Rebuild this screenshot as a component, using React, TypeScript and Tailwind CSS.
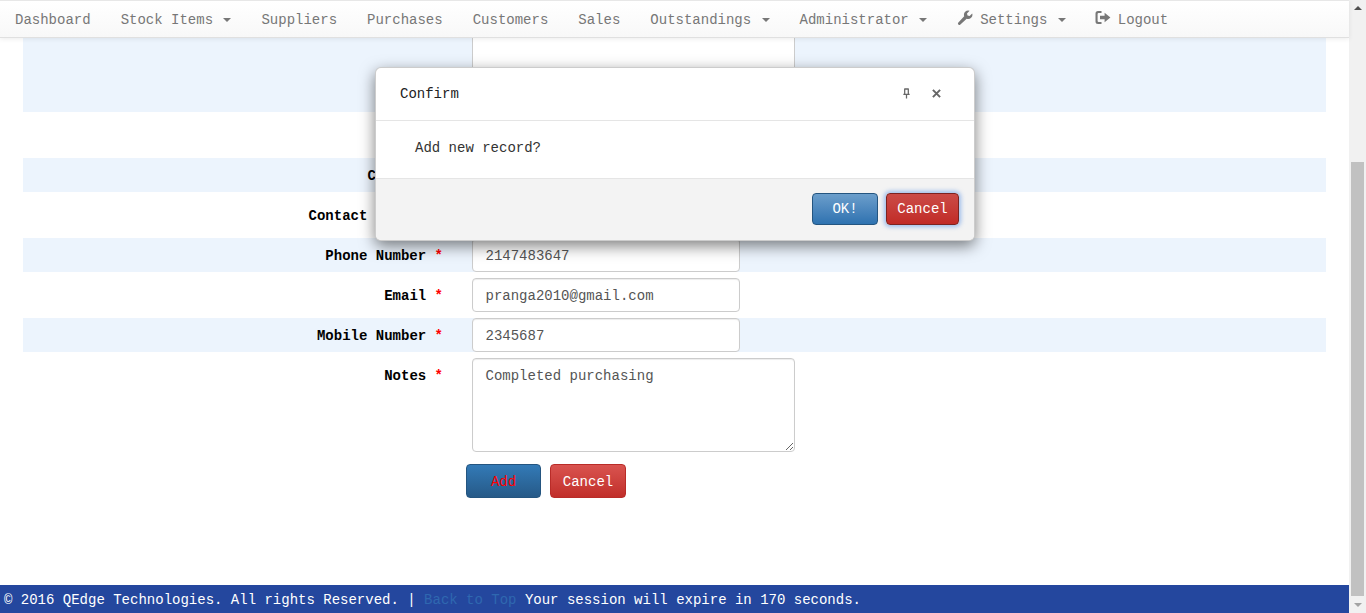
// Add record form with confirm dialog open, scrolled down under the fixed navbar

const Caret = () => (
  <span className="ml-[10.4px] w-[8px] h-0 border-x-[4px] border-t-[4px] border-x-transparent border-t-[#777] inline-block" />
);

const WrenchIcon = () => (
  <svg viewBox="0 0 16 16" className="w-[16px] h-[16px] text-[#777] mr-[7px] -mt-[5px]" fill="currentColor">
    <path d="M15.2 3.4l-2.6 2.6-2.1-.5-.5-2.1L12.6.8A4.3 4.3 0 0 0 7.2 6.3L1.4 12.6a1.4 1.4 0 0 0 2 2l6.3-5.8a4.3 4.3 0 0 0 5.5-5.4z" />
  </svg>
);

const LogoutIcon = () => (
  <svg viewBox="0 0 16 16" className="w-[16px] h-[16px] text-[#777] -ml-[1px] mr-[7px] -mt-[5px]" fill="currentColor">
    <path d="M6.5 1H3a2.5 2.5 0 0 0-2.5 2.5v8A2.5 2.5 0 0 0 3 14h3.5v-2H3.6a1 1 0 0 1-1-1V4a1 1 0 0 1 1-1h2.9z" />
    <path d="M5 5.8h4.6V2.8L15.4 7.5l-5.8 4.7V9.2H5z" />
  </svg>
);

const PinIcon = () => (
  <svg viewBox="0 0 10 12" className="w-[9px] h-[11px] text-[#666]" fill="none" stroke="currentColor">
    <path d="M2.5 1h5M3 1v5.5M7 1v5.5M1.5 7h7M5 7v4.5" strokeWidth="1.4" />
  </svg>
);

const CloseIcon = () => (
  <svg viewBox="0 0 10 10" className="w-[9px] h-[9px] text-[#666]" fill="none" stroke="currentColor">
    <path d="M1 1l8 8M9 1l-8 8" strokeWidth="2.2" />
  </svg>
);

function Row({ label, value, band }: { label: string; value: string; band?: boolean }) {
  return (
    <div className={`flex h-[34px] ${band ? 'bg-[#ecf4fd]' : ''}`}>
      <label className="w-[420px] text-right font-bold text-black leading-[36px]">
        {label} <span className="text-[#ff0000]">*</span>
      </label>
      <input
        readOnly
        value={value}
        className="ml-[29px] w-[268px] h-[34px] pl-[12.5px] pr-[12px] pt-[2px] bg-white border border-[#ccc] rounded-[4px] text-[#555] shadow-[inset_0_1px_1px_rgba(0,0,0,0.075)]"
      />
    </div>
  );
}

export default function App() {
  return (
    <div className="flex h-[613px] overflow-hidden bg-white text-[14px] font-['Liberation_Mono','Courier_New',monospace]">
      <div className="relative flex flex-col w-[1349px] h-full">
        {/* Navbar */}
        <nav className="relative z-10 flex items-center h-[38px] shrink-0 pt-[2px] border-t border-t-[#e7e7e7] border-b border-b-[#e0e0e0] bg-gradient-to-b from-white to-[#f8f8f8] text-[#777] shadow-[0_1px_5px_rgba(0,0,0,0.08)]">
          <a className="px-[15px]">Dashboard</a>
          <a className="px-[15px] flex items-center">Stock Items<Caret /></a>
          <a className="px-[15px]">Suppliers</a>
          <a className="px-[15px]">Purchases</a>
          <a className="px-[15px]">Customers</a>
          <a className="px-[15px]">Sales</a>
          <a className="px-[15px] flex items-center">Outstandings<Caret /></a>
          <a className="px-[15px] flex items-center">Administrator<Caret /></a>
          <a className="px-[15px] flex items-center"><WrenchIcon />Settings<Caret /></a>
          <a className="px-[15px] flex items-center"><LogoutIcon />Logout</a>
        </nav>

        {/* Form, scrolled */}
        <div className="flex flex-col gap-[6px] mx-[23px]">
          <div className="flex items-end h-[74px] bg-[#ecf4fd] overflow-hidden">
            <textarea readOnly className="ml-[449px] w-[323px] h-[94px] shrink-0 bg-white border border-[#ccc] rounded-[4px]" />
          </div>
          {/* this row sits fully behind the dialog */}
          <div className="h-[34px]" />
          <Row label="Country" value="" band />
          <Row label="Contact Person" value="" />
          <Row label="Phone Number" value="2147483647" band />
          <Row label="Email" value="pranga2010@gmail.com" />
          <Row label="Mobile Number" value="2345687" band />
          <div className="flex h-[94px]">
            <label className="w-[420px] text-right font-bold text-black leading-[36px]">
              Notes <span className="text-[#ff0000]">*</span>
            </label>
            <textarea
              readOnly
              value="Completed purchasing"
              className="ml-[29px] w-[323px] h-[94px] pl-[12.5px] pr-[12px] pt-[7px] leading-[20px] bg-white border border-[#ccc] rounded-[4px] text-[#555] shadow-[inset_0_1px_1px_rgba(0,0,0,0.075)]"
            />
          </div>
          <div className="flex gap-[9px] mt-[6px] ml-[443px]">
            <button className="w-[75px] h-[34px] pt-[2px] rounded-[4px] border border-[#245580] bg-gradient-to-b from-[#337ab7] to-[#265a88] text-[#ff0000]">Add</button>
            <button className="w-[76px] h-[34px] pt-[2px] rounded-[4px] border border-[#b92c28] bg-gradient-to-b from-[#d9534f] to-[#c12e2a] text-white">Cancel</button>
          </div>
        </div>

        {/* Footer */}
        <footer className="mt-auto h-[28px] shrink-0 bg-[#24479e] pl-[4px] leading-[30px] text-white whitespace-pre">
          © 2016 QEdge Technologies. All rights Reserved. | <a className="text-[#2f68b0]">Back to Top</a> Your session will expire in 170 seconds.
        </footer>

        {/* Confirm dialog */}
        <div className="absolute z-20 left-[375px] top-[67px] w-[600px] h-[174px] flex flex-col bg-white rounded-[6px] border border-black/20 shadow-[0_5px_15px_rgba(0,0,0,0.5)] overflow-hidden">
          <div className="flex items-center h-[53px] pl-[24px] pr-[33px] border-b border-[#e5e5e5] text-[#222]">
            <span className="flex-1">Confirm</span>
            <span className="flex items-center gap-[21px] -mt-[2px]">
              <PinIcon />
              <CloseIcon />
            </span>
          </div>
          <div className="h-[58px] pl-[39px] pt-[17px] leading-[20px] text-[#333] border-b border-[#e5e5e5]">Add new record?</div>
          <div className="flex-1 flex justify-end items-center gap-[8px] pr-[15px] pb-[2px] bg-[#f3f3f3]">
            <button className="w-[66px] h-[32px] pt-[2px] rounded-[4px] border border-[#245580] bg-gradient-to-b from-[#6b9ecb] to-[#2e72b0] text-white">OK!</button>
            <button className="w-[73px] h-[32px] pt-[2px] rounded-[4px] border border-[#7d2320] bg-gradient-to-b from-[#cb4b47] to-[#c12a26] text-white shadow-[0_0_4px_2px_rgba(102,153,230,0.6)]">Cancel</button>
          </div>
        </div>
      </div>

      {/* Scrollbar */}
      <div className="flex flex-col items-center justify-between w-[17px] h-full bg-[#f1f1f1] py-[6px]">
        <span className="w-0 h-0 border-x-[4px] border-b-[4px] border-x-transparent border-b-[#505050]" />
        <span className="w-0 h-0 border-x-[4px] border-t-[4px] border-x-transparent border-t-[#a3a3a3]" />
      </div>
      <div className="absolute left-[1351px] top-[162px] w-[13px] h-[434px] bg-[#c1c1c1]" />
    </div>
  );
}
